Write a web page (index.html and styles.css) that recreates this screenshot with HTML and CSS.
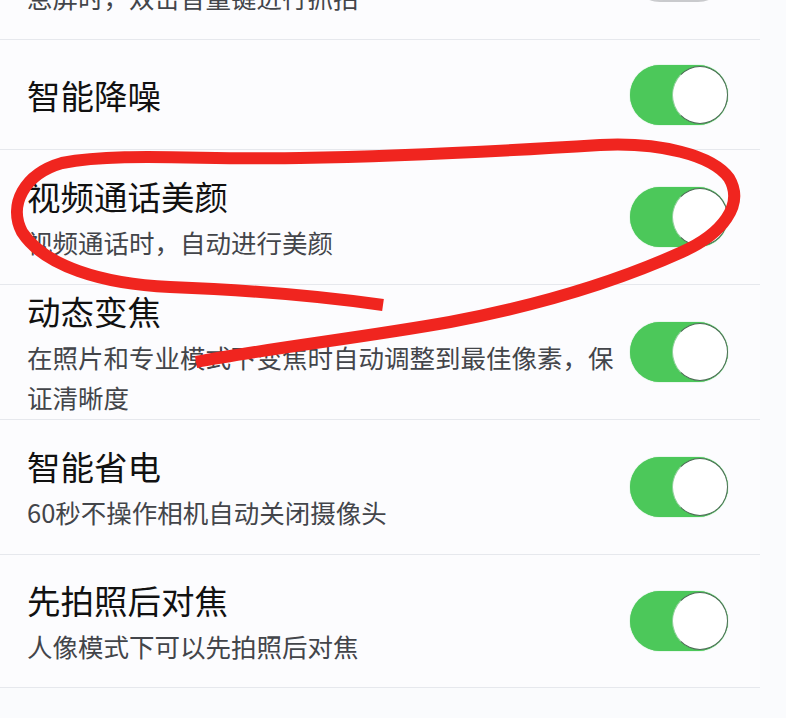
FILE: index.html
```html
<!DOCTYPE html>
<html lang="zh-CN">
<head>
<meta charset="utf-8">
<title>相机设置</title>
<link rel="stylesheet" href="styles.css">
</head>
<body>
<div class="page">
  <div class="list">
    <div class="row row-top">
      <div class="text">
        <div class="title">息屏抓拍</div>
        <div class="sub">息屏时，双击音量键进行抓拍</div>
      </div>
      <div class="switch off"><span class="knob"></span></div>
    </div>
    <div class="row row-short">
      <div class="text">
        <div class="title">智能降噪</div>
      </div>
      <div class="switch"><span class="knob"></span></div>
    </div>
    <div class="row">
      <div class="text">
        <div class="title">视频通话美颜</div>
        <div class="sub">视频通话时，自动进行美颜</div>
      </div>
      <div class="switch"><span class="knob"></span></div>
    </div>
    <div class="row row-tight">
      <div class="text">
        <div class="title">动态变焦</div>
        <div class="sub">在照片和专业模式下变焦时自动调整到最佳像素，保证清晰度</div>
      </div>
      <div class="switch"><span class="knob"></span></div>
    </div>
    <div class="row">
      <div class="text">
        <div class="title">智能省电</div>
        <div class="sub">60秒不操作相机自动关闭摄像头</div>
      </div>
      <div class="switch"><span class="knob"></span></div>
    </div>
    <div class="row row-last">
      <div class="text">
        <div class="title">先拍照后对焦</div>
        <div class="sub">人像模式下可以先拍照后对焦</div>
      </div>
      <div class="switch"><span class="knob"></span></div>
    </div>
  </div>
  <svg class="scribble" width="786" height="718" viewBox="0 0 786 718" aria-hidden="true">
    <path d="M383,305 C320,296 250,290 170,287 C102,284 44,266 22,232 C8,205 24,174 62,163 C120,152 200,160 300,158 C420,156 520,150 600,145 C660,142 712,155 729,178 C745,205 722,234 682,252 C620,280 540,305 450,322 C360,338 270,348 196,362" fill="none" stroke="#f0251f" stroke-width="12" stroke-linecap="butt" stroke-linejoin="round"/>
  </svg>
</div>
</body>
</html>
```
FILE: styles.css
```css
html, body {
  margin: 0;
  padding: 0;
  background: #fafbfd;
}
body {
  width: 786px;
  height: 718px;
  overflow: hidden;
  font-family: "Noto Sans CJK SC", "Noto Sans", sans-serif;
}
.page {
  position: relative;
  width: 786px;
  height: 718px;
  overflow: hidden;
}
.list {
  width: 760px;
  background: #fcfcfe;
}
.row {
  display: flex;
  align-items: center;
  gap: 3px;
  box-sizing: border-box;
  height: 135px;
  padding: 0 32px 0 27px;
  border-bottom: 1.5px solid #e6e8ed;
}
.row-top {
  margin-top: -95px;
}
.row-short {
  height: 110px;
}
.row-last {
  height: 133px;
}
.text {
  flex: 1;
  min-width: 0;
}
.title {
  font-size: 33.5px;
  line-height: 46px;
  color: #111111;
}
.sub {
  margin-top: 3px;
  font-size: 25.5px;
  line-height: 40px;
  color: #43454a;
}
.switch {
  flex: none;
  position: relative;
  width: 98px;
  height: 60px;
  border-radius: 30px;
  background: #4cc85a;
  box-shadow: 0 0 1px #4cc85a;
}
.switch .knob {
  position: absolute;
  top: 1px;
  right: 0;
  width: 54px;
  height: 56px;
  border-radius: 50%;
  background: #ffffff;
  border: 1.5px solid #4d6b56;
  border-left-color: #8fcf99;
}
.switch.off {
  background: #c9cacd;
  box-shadow: none;
}
.switch.off .knob {
  right: auto;
  left: 0;
  border-color: #c9cacd;
}
.scribble {
  position: absolute;
  top: 0;
  left: 0;
  pointer-events: none;
}
```
